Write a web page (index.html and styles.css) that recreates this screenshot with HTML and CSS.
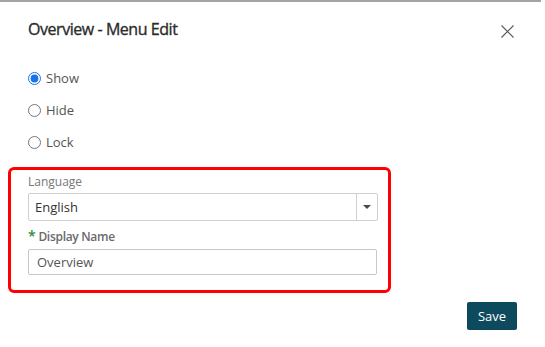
FILE: index.html
```html
<!DOCTYPE html>
<html lang="en">
<head>
  <meta charset="UTF-8">
  <title>Overview - Menu Edit</title>
  <link rel="stylesheet" href="styles.css">
</head>
<body>
  <div class="dialog">
    <header class="dialog-header">
      <h1>Overview - Menu Edit</h1>
      <button class="close" type="button" aria-label="Close">
        <svg width="13" height="13" viewBox="0 0 13 13">
          <path d="M0.5 0.5 L12.5 12.5 M12.5 0.5 L0.5 12.5" stroke="#555" stroke-width="1.1" fill="none"/>
        </svg>
      </button>
    </header>

    <div class="options">
      <label class="option"><input type="radio" name="mode" checked> Show</label>
      <label class="option"><input type="radio" name="mode"> Hide</label>
      <label class="option"><input type="radio" name="mode"> Lock</label>
    </div>

    <div class="highlight">
      <label class="field-label" for="language">Language</label>
      <div class="select">
        <span class="select-value">English</span>
        <span class="select-arrow">
          <svg width="8" height="4" viewBox="0 0 8 4"><path d="M0 0 H8 L4 4 Z" fill="#4a4a4a"/></svg>
        </span>
      </div>

      <label class="field-label required" for="display_name"><span class="star">*</span>Display Name</label>
      <input class="text-input" type="text" id="display_name" value="Overview">
    </div>

    <footer class="dialog-footer">
      <button class="save" type="button">Save</button>
    </footer>
  </div>
</body>
</html>
```

FILE: styles.css
```css
body {
  margin: 0;
  font-family: 'Open Sans', sans-serif;
  background: #fff;
}

.dialog {
  width: 541px;
  height: 347px;
  box-sizing: border-box;
  border-top: 2px solid #a3a3a3;
}

.dialog-header {
  display: flex;
  align-items: center;
  justify-content: space-between;
  height: 54px;
  padding: 0 27px 0 28px;
}

.dialog-header h1 {
  margin: 0;
  font-size: 16px;
  font-weight: 400;
  color: #2b2b2b;
  letter-spacing: -0.45px;
  -webkit-text-stroke: 0.35px #2b2b2b;
}

.close {
  border: none;
  background: none;
  padding: 0;
  width: 13px;
  height: 13px;
  display: flex;
  margin-top: 4px;
}

.options {
  display: flex;
  flex-direction: column;
  padding-left: 28px;
  padding-top: 6px;
}

.option {
  display: flex;
  align-items: center;
  height: 32px;
  font-size: 13px;
  color: #555;
}

.option input {
  margin: 0 5px 0 0;
  width: 13px;
  height: 13px;
  accent-color: #1a73e8;
}

.highlight {
  margin: 9px 0 0 8px;
  width: 383px;
  box-sizing: border-box;
  border: 3px solid #ff0000;
  border-radius: 6px;
  padding: 4px 10px 15px 17px;
  display: flex;
  flex-direction: column;
}

.field-label {
  font-size: 12px;
  line-height: 16px;
  color: #777;
}

.field-label.required {
  font-weight: 600;
  color: #6a6a6a;
  margin-top: 7px;
  letter-spacing: -0.3px;
}

.star {
  color: #2e8b3e;
  font-size: 14px;
  margin-right: 3px;
}

.select {
  display: flex;
  height: 28px;
  margin-top: 3px;
  box-sizing: border-box;
  border: 1px solid #d0d0d0;
  border-radius: 2px;
}

.select-value {
  flex: 1;
  display: flex;
  align-items: center;
  padding-left: 6px;
  font-size: 13px;
  color: #333;
}

.select-arrow {
  width: 20px;
  display: flex;
  align-items: center;
  justify-content: center;
  border-left: 1px solid #d0d0d0;
}

.text-input {
  margin-top: 4px;
  width: 349px;
  height: 26px;
  box-sizing: border-box;
  border: 1px solid #c8c8c8;
  border-radius: 2px;
  padding: 0 8px;
  font-family: inherit;
  font-size: 13px;
  color: #555;
}

.dialog-footer {
  display: flex;
  justify-content: flex-end;
  padding: 9px 24px 0 0;
}

.save {
  width: 50px;
  height: 28px;
  border: none;
  border-radius: 2px;
  background: #0e4a5e;
  color: #fff;
  font-family: inherit;
  font-size: 13px;
  font-weight: 400;
}
```
